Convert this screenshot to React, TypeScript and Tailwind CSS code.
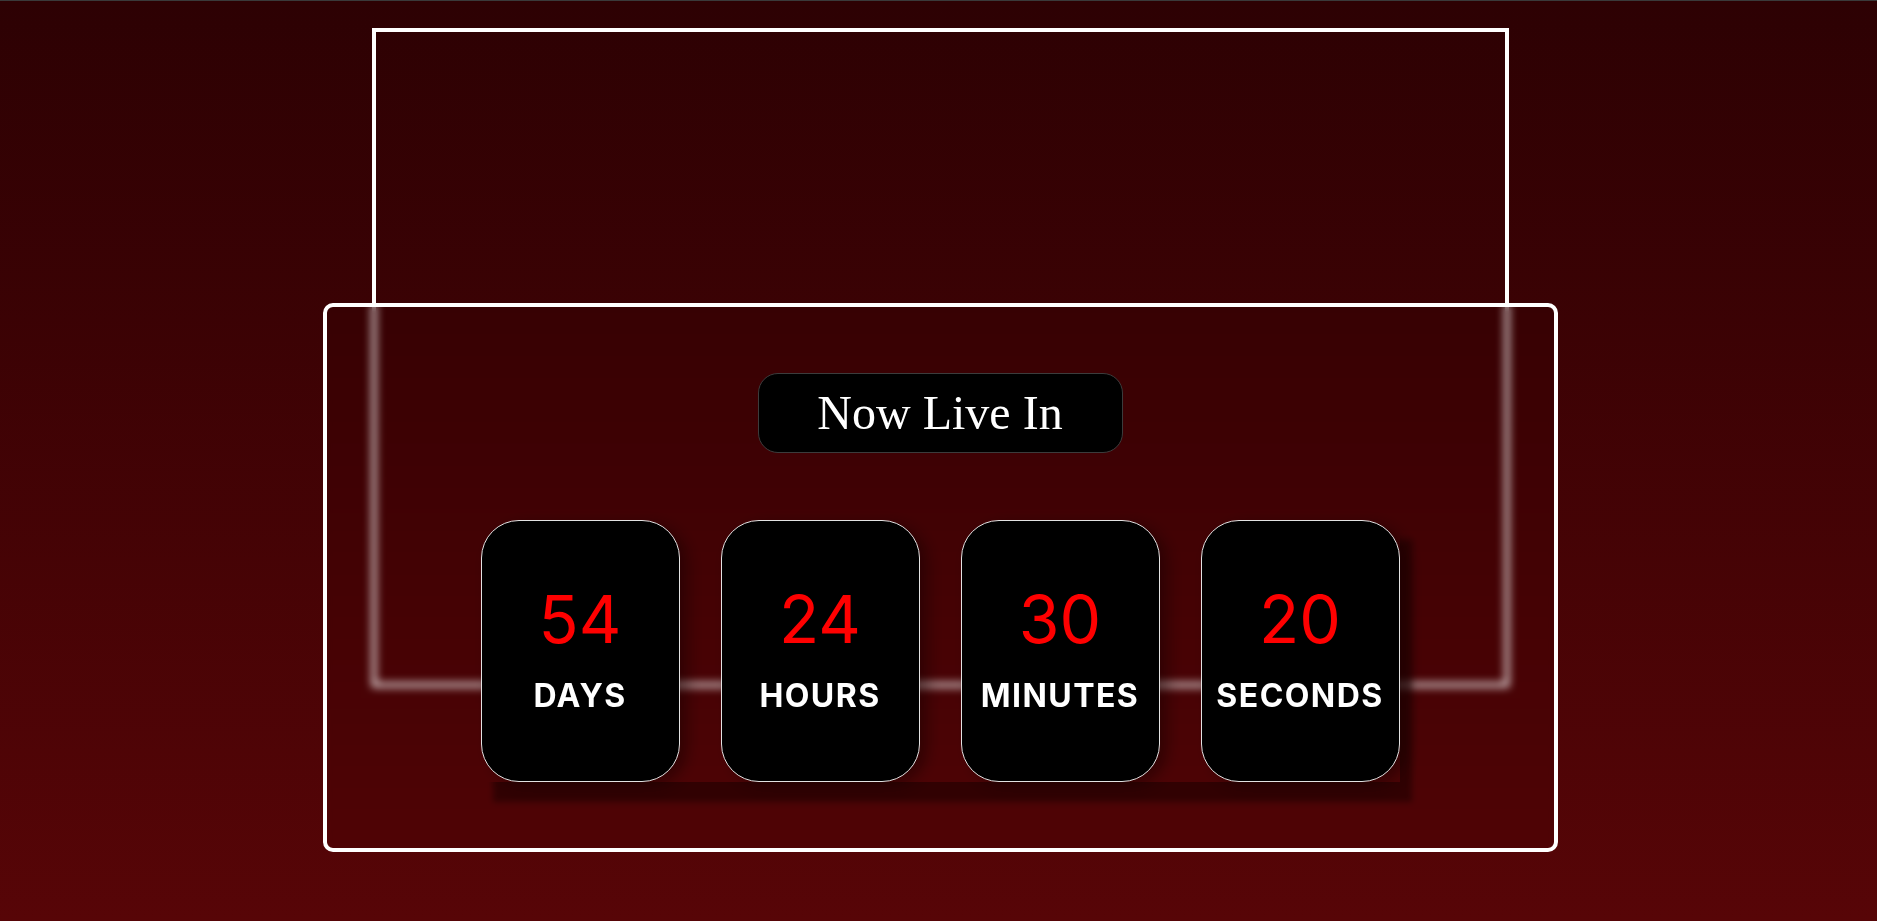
import React from "react";

const items = [
  { value: "54", label: "DAYS" },
  { value: "24", label: "HOURS" },
  { value: "30", label: "MINUTES" },
  { value: "20", label: "SECONDS" },
];

export default function App() {
  return (
    <div className="min-h-screen w-full border-t border-[#3a3a3a] bg-gradient-to-b from-[#2d0103] to-[#570507] pl-[3px] pt-[27px]">
      <div className="flex flex-col items-center">
        <div className="h-[659px] w-[1137px] border-4 border-white" />
        <div className="mt-[-384px] flex h-[549px] w-[1235px] flex-col items-center rounded-[10px] border-4 border-white bg-black/[0.04] pt-[66px] backdrop-blur-[4px]">
          <div className="flex h-[80px] w-[365px] items-center justify-center rounded-[20px] border border-[#3c3c3c] bg-black">
            <span
              className="text-[48px] leading-none text-white"
              style={{ fontFamily: '"Liberation Serif", "DejaVu Serif", serif' }}
            >
              Now Live In
            </span>
          </div>
          <div className="mt-[67px] flex gap-[41px] shadow-[12px_20px_6px_rgba(25,0,0,0.55)]">
            {items.map((it) => (
              <div
                key={it.label}
                className="flex h-[262px] w-[199px] flex-col items-center justify-center rounded-[38px] border border-[#e2e2e2] bg-black pb-[4px] shadow-[8px_4px_14px_rgba(20,0,0,0.45)]"
                style={{ fontFamily: 'Inter, "Noto Sans", sans-serif' }}
              >
                <span className="text-[66px] font-normal leading-none text-[#ff0000]">
                  {it.value}
                </span>
                <span className="mt-[28px] text-[32px] font-bold leading-none tracking-[0.045em] text-white">
                  {it.label}
                </span>
              </div>
            ))}
          </div>
        </div>
      </div>
    </div>
  );
}
